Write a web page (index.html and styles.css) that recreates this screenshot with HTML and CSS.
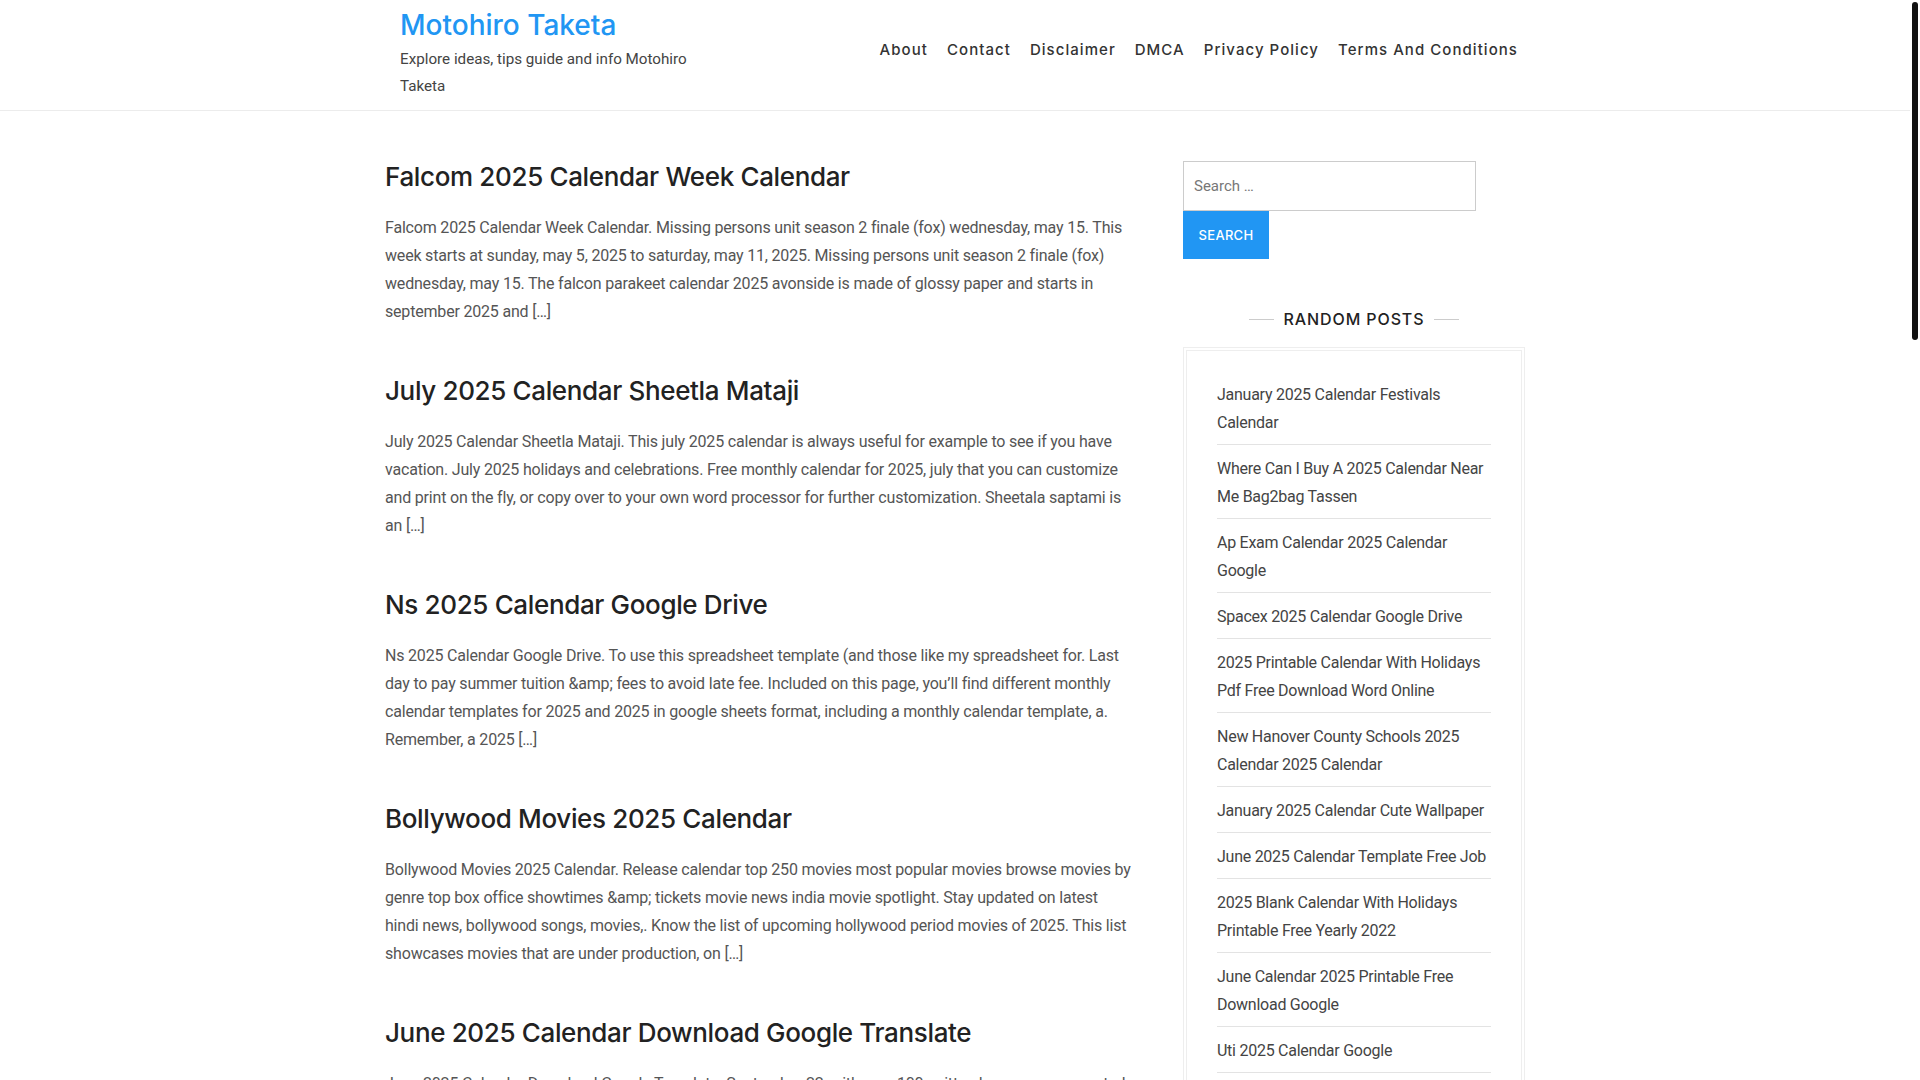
FILE: index.html
```html
<!DOCTYPE html>
<html lang="en">
<head>
<meta charset="utf-8">
<title>Motohiro Taketa</title>
<link rel="stylesheet" href="styles.css">
</head>
<body>
<div class="page">
  <header class="site-header">
    <div class="container header-inner">
      <div class="branding">
        <a class="site-title" href="#">Motohiro Taketa</a>
        <p class="site-desc">Explore ideas, tips guide and info Motohiro Taketa</p>
      </div>
      <nav class="main-nav">
        <a href="#">About</a>
        <a href="#">Contact</a>
        <a href="#">Disclaimer</a>
        <a href="#">DMCA</a>
        <a href="#">Privacy Policy</a>
        <a href="#">Terms And Conditions</a>
      </nav>
    </div>
  </header>

  <div class="container content">
    <main class="posts">
      <article class="post">
        <h2 class="post-title">Falcom 2025 Calendar Week Calendar</h2>
        <p class="post-excerpt">Falcom 2025 Calendar Week Calendar. Missing persons unit season 2 finale (fox) wednesday, may 15. This week starts at sunday, may 5, 2025 to saturday, may 11, 2025. Missing persons unit season 2 finale (fox) wednesday, may 15. The falcon parakeet calendar 2025 avonside is made of glossy paper and starts in september 2025 and […]</p>
      </article>
      <article class="post">
        <h2 class="post-title">July 2025 Calendar Sheetla Mataji</h2>
        <p class="post-excerpt">July 2025 Calendar Sheetla Mataji. This july 2025 calendar is always useful for example to see if you have vacation. July 2025 holidays and celebrations. Free monthly calendar for 2025, july that you can customize and print on the fly, or copy over to your own word processor for further customization. Sheetala saptami is an […]</p>
      </article>
      <article class="post">
        <h2 class="post-title">Ns 2025 Calendar Google Drive</h2>
        <p class="post-excerpt">Ns 2025 Calendar Google Drive. To use this spreadsheet template (and those like my spreadsheet for. Last day to pay summer tuition &amp;amp; fees to avoid late fee. Included on this page, you’ll find different monthly calendar templates for 2025 and 2025 in google sheets format, including a monthly calendar template, a. Remember, a 2025 […]</p>
      </article>
      <article class="post">
        <h2 class="post-title">Bollywood Movies 2025 Calendar</h2>
        <p class="post-excerpt">Bollywood Movies 2025 Calendar. Release calendar top 250 movies most popular movies browse movies by genre top box office showtimes &amp;amp; tickets movie news india movie spotlight. Stay updated on latest hindi news, bollywood songs, movies,. Know the list of upcoming hollywood period movies of 2025. This list showcases movies that are under production, on […]</p>
      </article>
      <article class="post">
        <h2 class="post-title">June 2025 Calendar Download Google Translate</h2>
        <p class="post-excerpt">June 2025 Calendar Download Google Translate. September 22, with over 100 written languages supported, Google Translate is one of the best free tools to translate your calendar. Download the template and […]</p>
      </article>
    </main>

    <aside class="sidebar">
      <form class="search-form">
        <input class="search-field" type="search" placeholder="Search …">
        <button class="search-submit" type="button">Search</button>
      </form>

      <h3 class="widget-title"><span>Random Posts</span></h3>
      <div class="widget-box">
        <ul class="random-list">
          <li><a href="#">January 2025 Calendar Festivals Calendar</a></li>
          <li><a href="#">Where Can I Buy A 2025 Calendar Near Me Bag2bag Tassen</a></li>
          <li><a href="#">Ap Exam Calendar 2025 Calendar Google</a></li>
          <li><a href="#">Spacex 2025 Calendar Google Drive</a></li>
          <li><a href="#">2025 Printable Calendar With Holidays Pdf Free Download Word Online</a></li>
          <li><a href="#">New Hanover County Schools 2025 Calendar 2025 Calendar</a></li>
          <li><a href="#">January 2025 Calendar Cute Wallpaper</a></li>
          <li><a href="#">June 2025 Calendar Template Free Job</a></li>
          <li><a href="#">2025 Blank Calendar With Holidays Printable Free Yearly 2022</a></li>
          <li><a href="#">June Calendar 2025 Printable Free Download Google</a></li>
          <li><a href="#">Uti 2025 Calendar Google</a></li>
          <li><a href="#">Calendar 2025 Printable Free Monthly</a></li>
        </ul>
      </div>
    </aside>
  </div>
</div>
<div class="scroll-thumb"></div>
</body>
</html>
```

FILE: styles.css
```css
html, body {
  margin: 0;
  padding: 0;
  height: 100%;
  overflow: hidden;
  background: #fff;
}

body {
  font-family: Roboto, "Liberation Sans", sans-serif;
  color: #555;
}

a {
  text-decoration: none;
  color: inherit;
}

.page {
  width: calc(100% - 10px);
}

.container {
  width: 1140px;
  margin: 0 auto;
}

/* Header */
.site-header {
  border-bottom: 1px solid #ececec;
  height: 111px;
  box-sizing: border-box;
}

.header-inner {
  display: flex;
  justify-content: space-between;
  align-items: flex-start;
}

.branding {
  padding: 7px 0 0 15px;
  width: 320px;
}

.site-title {
  display: block;
  font-family: Inter, "Open Sans", sans-serif;
  font-weight: 500;
  font-size: 28px;
  line-height: 36px;
  color: #2196f3;
}

.site-desc {
  margin: 3px 0 0;
  font-size: 15.2px;
  line-height: 27px;
  color: #444;
}

.main-nav {
  display: flex;
  margin-top: 40px;
}

.main-nav a {
  font-family: Inter, "Open Sans", sans-serif;
  font-weight: 500;
  font-size: 15px;
  line-height: 20px;
  letter-spacing: 1.05px;
  color: #333;
  padding: 0 9.5px;
}

.main-nav a:last-child {
  padding-right: 7px;
}

/* Content */
.content {
  display: grid;
  grid-template-columns: 748px 342px;
  column-gap: 50px;
}

.posts {
  padding-top: 49px;
}

.post {
  margin-bottom: 48px;
}

.post-title {
  margin: 0 0 20px;
  font-family: Inter, "Open Sans", sans-serif;
  font-weight: 500;
  font-size: 26px;
  line-height: 34px;
  color: #222;
  letter-spacing: -0.35px;
}

.post-excerpt {
  margin: 0;
  font-size: 16px;
  line-height: 28px;
  letter-spacing: -0.19px;
  color: #555;
}

/* Sidebar */
.sidebar {
  padding-top: 50px;
}

.search-form {
  display: flex;
  flex-direction: column;
  align-items: flex-start;
}

.search-field {
  box-sizing: border-box;
  width: 293px;
  height: 50px;
  border: 1px solid #ccc;
  border-radius: 0;
  padding: 0 10px;
  font-family: Roboto, sans-serif;
  font-size: 15px;
  color: #555;
  outline: none;
}

.search-field::placeholder {
  color: #777;
}

.search-submit {
  box-sizing: border-box;
  width: 86px;
  height: 48px;
  border: 0;
  border-radius: 0;
  background: #2196f3;
  color: #fff;
  font-family: Inter, sans-serif;
  font-weight: 500;
  font-size: 13px;
  text-transform: uppercase;
  letter-spacing: 0.3px;
  padding: 0;
}

.widget-title {
  margin: 44px 0 0;
  display: flex;
  justify-content: center;
  align-items: center;
  gap: 10px;
  font-family: Inter, sans-serif;
  font-weight: 500;
  font-size: 16px;
  line-height: 32px;
  letter-spacing: 0.9px;
  text-transform: uppercase;
  color: #222;
}

.widget-title::before,
.widget-title::after {
  content: "";
  width: 25px;
  height: 1px;
  background: #ccc;
}

.widget-box {
  margin-top: 12px;
  border: 1px solid #eee;
  padding: 2px;
}

.random-list {
  list-style: none;
  margin: 0;
  border: 1px solid #eee;
  padding: 20px 30px 30px;
}

.random-list li {
  padding: 10px 0 7px;
  border-bottom: 1px solid #e3e3e3;
  font-size: 16px;
  line-height: 28px;
  letter-spacing: -0.26px;
  color: #444;
}

.scroll-thumb {
  position: fixed;
  top: 2px;
  right: 2px;
  width: 6px;
  height: 338px;
  border-radius: 3px;
  background: #111;
}
```
